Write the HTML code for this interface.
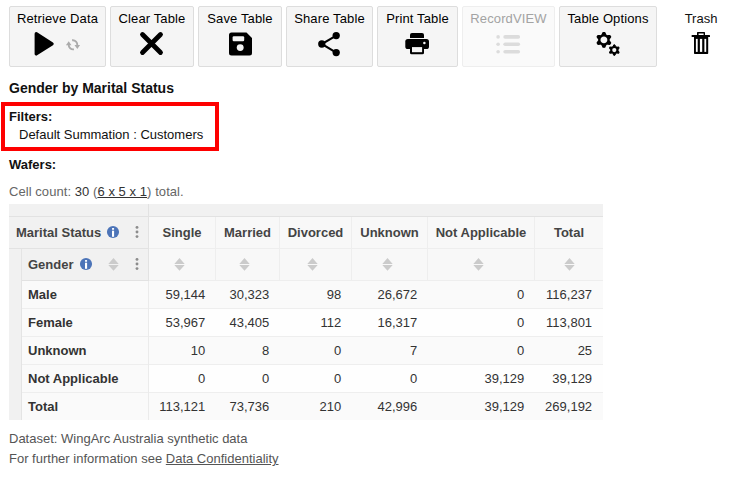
<!DOCTYPE html>
<html>
<head>
<meta charset="utf-8">
<title>Gender by Marital Status</title>
<style>
html,body{margin:0;padding:0;background:#fff;}
body{width:741px;height:478px;position:relative;overflow:hidden;font-family:"Liberation Sans",sans-serif;font-size:13px;color:#111;}
.abs{position:absolute;white-space:nowrap;}
.btn{position:absolute;top:6px;height:61px;box-sizing:border-box;border:1px solid #dddddd;border-radius:2px;background:#f5f5f5;text-align:center;}
.btn.dis{background:#fafafa;border-color:#eeeeee;color:#a3a3a3;}
.btn .lbl{position:absolute;left:0;right:0;top:4px;line-height:15px;font-size:13px;letter-spacing:0.13px;color:#000;}
.btn.dis .lbl{color:#a3a3a3;}
.btn svg{position:absolute;}
.t{position:absolute;line-height:15px;white-space:nowrap;}
.b{font-weight:bold;}
/* table */
.cell{position:absolute;box-sizing:border-box;}
.hd{color:#444;font-weight:bold;}
.num{position:absolute;text-align:right;line-height:15px;color:#333;}
</style>
</head>
<body>

<!-- toolbar -->
<div class="btn" style="left:9px;width:97px;"><span class="lbl">Retrieve Data</span>
<svg style="left:20px;top:22px" width="30" height="30" viewBox="30 29 30 30"><path d="M36.2 33.7 L52.1 43.85 L36.2 54 Z" fill="#000" stroke="#000" stroke-width="3.2" stroke-linejoin="round"/></svg>
<svg style="left:50px;top:30px" width="24" height="18" viewBox="60 37 24 18"><g fill="none" stroke="#ababab" stroke-width="1.9"><path d="M73.9 49.3 A4.5 4.5 0 0 1 68.7 44.6"/><path d="M72.1 40.3 A4.6 4.6 0 0 1 77.3 45.6"/></g><path d="M68.7 41.3 L65.9 45.3 L71.5 45.3 Z" fill="#ababab"/><path d="M77.3 48.9 L74.5 45 L80.1 45 Z" fill="#ababab"/></svg>
</div>

<div class="btn" style="left:110px;width:84px;"><span class="lbl">Clear Table</span>
<svg style="left:27.95px;top:24px" width="25" height="25" viewBox="0 0 25 25"><path d="M3.5 3.5 L21.5 21.5 M21.5 3.5 L3.5 21.5" stroke="#000" stroke-width="4.8" stroke-linecap="round" fill="none"/></svg>
</div>

<div class="btn" style="left:198px;width:84px;"><span class="lbl">Save Table</span>
<svg style="left:28.7px;top:25px" width="25" height="25" viewBox="0 0 25 25"><path d="M3.5 0.5 H18.5 L24 6 V21 a2.5 2.5 0 0 1 -2.5 2.5 H3.5 a2.5 2.5 0 0 1 -2.5 -2.5 V3 a2.5 2.5 0 0 1 2.5 -2.5 Z" fill="#000"/><rect x="4.6" y="4.3" width="11.6" height="4.9" rx="1.2" fill="#f5f5f5"/><circle cx="12.2" cy="15.6" r="3.45" fill="#f5f5f5"/></svg>
</div>

<div class="btn" style="left:286px;width:87px;"><span class="lbl">Share Table</span>
<svg style="left:29.2px;top:23.2px" width="26" height="27" viewBox="0 0 26 27"><path d="M20.2 5.6 L5.8 14 L20.2 22.6" stroke="#000" stroke-width="2.05" fill="none"/><circle cx="20.2" cy="5.6" r="3.65" fill="#000"/><circle cx="5.8" cy="14" r="3.65" fill="#000"/><circle cx="20.2" cy="22.6" r="3.65" fill="#000"/></svg>
</div>

<div class="btn" style="left:377px;width:81px;"><span class="lbl">Print Table</span>
<svg style="left:22px;top:23px" width="36" height="30" viewBox="400 30 36 30"><path d="M410 38 V35 a2 2 0 0 1 2 -2 H422 a2 2 0 0 1 2 2 V38 Z" fill="#000"/><rect x="405.3" y="39" width="23.7" height="10" rx="2.6" fill="#000"/><rect x="410" y="45" width="14" height="9.3" rx="1.6" fill="#000"/><rect x="412" y="47.1" width="10.1" height="5.1" fill="#f5f5f5"/><circle cx="424.4" cy="42.9" r="1.25" fill="#f5f5f5"/></svg>
</div>

<div class="btn dis" style="left:462px;width:93px;"><span class="lbl">RecordVIEW</span>
<svg style="left:32px;top:26px" width="28" height="22" viewBox="0 0 28 22"><g fill="#dcdcdc"><circle cx="3.1" cy="3.9" r="1.8"/><circle cx="3.1" cy="11.2" r="1.8"/><circle cx="3.1" cy="18.7" r="1.8"/><rect x="8.3" y="2.1" width="16.8" height="3.6" rx="1.8"/><rect x="8.3" y="9.4" width="16.8" height="3.6" rx="1.8"/><rect x="8.3" y="16.9" width="16.8" height="3.6" rx="1.8"/></g></svg>
</div>

<div class="btn" style="left:559px;width:98px;"><span class="lbl">Table Options</span>
<svg style="left:30px;top:21px" width="36" height="32" viewBox="590 28 36 32"><g transform="translate(603.9,39.9)"><circle r="4.65" fill="none" stroke="#000" stroke-width="2.4"/><g fill="#000" stroke="#000" stroke-width="1.3" stroke-linejoin="round"><path d="M-1.7 -5.4 L-0.8 -7.3 L0.8 -7.3 L1.7 -5.4 Z" transform="rotate(0)"/><path d="M-1.7 -5.4 L-0.8 -7.3 L0.8 -7.3 L1.7 -5.4 Z" transform="rotate(60)"/><path d="M-1.7 -5.4 L-0.8 -7.3 L0.8 -7.3 L1.7 -5.4 Z" transform="rotate(120)"/><path d="M-1.7 -5.4 L-0.8 -7.3 L0.8 -7.3 L1.7 -5.4 Z" transform="rotate(180)"/><path d="M-1.7 -5.4 L-0.8 -7.3 L0.8 -7.3 L1.7 -5.4 Z" transform="rotate(240)"/><path d="M-1.7 -5.4 L-0.8 -7.3 L0.8 -7.3 L1.7 -5.4 Z" transform="rotate(300)"/></g></g><g transform="translate(614.3,50.1)"><circle r="3.1" fill="none" stroke="#000" stroke-width="2.0"/><g fill="#000" stroke="#000" stroke-width="1.0" stroke-linejoin="round"><path d="M-1.2 -3.8 L-0.5 -5.25 L0.5 -5.25 L1.2 -3.8 Z" transform="rotate(0)"/><path d="M-1.2 -3.8 L-0.5 -5.25 L0.5 -5.25 L1.2 -3.8 Z" transform="rotate(60)"/><path d="M-1.2 -3.8 L-0.5 -5.25 L0.5 -5.25 L1.2 -3.8 Z" transform="rotate(120)"/><path d="M-1.2 -3.8 L-0.5 -5.25 L0.5 -5.25 L1.2 -3.8 Z" transform="rotate(180)"/><path d="M-1.2 -3.8 L-0.5 -5.25 L0.5 -5.25 L1.2 -3.8 Z" transform="rotate(240)"/><path d="M-1.2 -3.8 L-0.5 -5.25 L0.5 -5.25 L1.2 -3.8 Z" transform="rotate(300)"/></g></g></svg>
</div>

<div class="abs" style="left:661px;top:6px;width:80px;height:60px;text-align:center;"><span class="lbl" style="position:absolute;left:0;right:0;top:5px;line-height:15px;">Trash</span>
<svg style="position:absolute;left:23px;top:22px" width="36" height="30" viewBox="684 28 36 30"><rect x="697" y="31.9" width="8" height="4" rx="0.6" fill="#000"/><rect x="698.6" y="33.5" width="5" height="2" fill="#fff"/><rect x="691.6" y="34.9" width="18.4" height="2" rx="0.5" fill="#000"/><path d="M694 36.5 H708.2 V53.2 a0.7 0.7 0 0 1 -0.7 0.7 H694.7 a0.7 0.7 0 0 1 -0.7 -0.7 Z" fill="#000"/><rect x="695.9" y="38.9" width="1.8" height="13" fill="#fff"/><rect x="699.9" y="38.9" width="2.3" height="13" fill="#fff"/><rect x="704.4" y="38.9" width="1.8" height="13" fill="#fff"/></svg>
</div>

<!-- headings -->
<div class="t b" style="left:9px;top:80px;font-size:14px;line-height:16px;">Gender by Marital Status</div>
<div class="abs" style="left:1px;top:102px;width:218px;height:49px;box-sizing:border-box;border:4px solid #fe0000;"></div>
<div class="t b" style="left:9px;top:109px;">Filters:</div>
<div class="t" style="left:19px;top:127px;">Default Summation : Customers</div>
<div class="t b" style="left:9px;top:157px;">Wafers:</div>
<div class="t" style="left:9px;top:184px;color:#666;letter-spacing:0.06px;">Cell count: <span style="color:#333">30</span> (<span style="color:#333;text-decoration:underline">6 x 5 x 1</span>) total.</div>

<!-- table -->
<div id="tbl" class="abs" style="left:9px;top:204px;width:594px;height:216px;background:#eeeeee;"></div>
<!-- darker header borders -->
<div class="cell" style="left:9px;top:216px;width:594px;height:1px;background:#e2e2e2;"></div>
<div class="cell" style="left:148px;top:204px;width:1px;height:77px;background:#e2e2e2;"></div>
<div class="cell" style="left:9px;top:248px;width:140px;height:1px;background:#e2e2e2;"></div>
<div class="cell" style="left:21px;top:280px;width:128px;height:1px;background:#e2e2e2;"></div>
<div class="cell" style="left:21px;top:249px;width:1px;height:171px;background:#e4e4e4;"></div>
<div class="cell" style="left:148px;top:281px;width:1px;height:139px;background:#ebebeb;"></div>
<!-- top strip -->
<div class="cell" style="left:9px;top:204px;width:139px;height:12px;background:#f1f1f1;"></div>
<div class="cell" style="left:149px;top:204px;width:454px;height:12px;background:#f1f1f1;"></div>
<!-- marital status header -->
<div class="cell" style="left:9px;top:217px;width:139px;height:31px;background:#f1f1f1;"></div>
<!-- left strip -->
<div class="cell" style="left:9px;top:249px;width:12px;height:171px;background:#f1f1f1;"></div>
<!-- gender header -->
<div class="cell" style="left:22px;top:249px;width:126px;height:31px;background:#f1f1f1;"></div>

<div class="t hd" style="left:16px;top:225px;">Marital Status</div>
<div class="t hd" style="left:28px;top:257px;">Gender</div>

<!-- icons -->
<svg class="abs" style="left:106.05px;top:224.95px" width="14" height="14" viewBox="0 0 14 14"><circle cx="7" cy="7" r="6.05" fill="#4c74b8"/><rect x="6" y="2.9" width="2.1" height="1.9" rx="0.5" fill="#fff"/><rect x="6" y="5.7" width="2.1" height="6.1" fill="#fff"/></svg>
<svg class="abs" style="left:79.00px;top:257.00px" width="14" height="14" viewBox="0 0 14 14"><circle cx="7" cy="7" r="6.05" fill="#4c74b8"/><rect x="6" y="2.9" width="2.1" height="1.9" rx="0.5" fill="#fff"/><rect x="6" y="5.7" width="2.1" height="6.1" fill="#fff"/></svg>
<svg class="abs" style="left:133.90px;top:225.00px" width="6" height="14" viewBox="0 0 6 14"><g fill="#8c8c8c"><circle cx="3" cy="2.4" r="1.45"/><circle cx="3" cy="7" r="1.45"/><circle cx="3" cy="11.6" r="1.45"/></g></svg>
<svg class="abs" style="left:133.90px;top:256.85px" width="6" height="14" viewBox="0 0 6 14"><g fill="#8c8c8c"><circle cx="3" cy="2.4" r="1.45"/><circle cx="3" cy="7" r="1.45"/><circle cx="3" cy="11.6" r="1.45"/></g></svg>
<div id="gen">
<div class="cell" style="left:149px;top:217px;width:66px;height:31px;background:#f8f8f8;"></div>
<div class="cell" style="left:149px;top:249px;width:66px;height:31px;background:#f8f8f8;"></div>
<div class="t hd" style="left:149px;width:66px;top:225px;text-align:center;">Single</div>
<svg class="abs" style="left:173.6px;top:257.5px" width="11" height="13" viewBox="0 0 11 13"><path d="M0.3 6 L5.5 0 L10.7 6 Z M0.3 7.1 L5.5 12.7 L10.7 7.1 Z" fill="#cbcbcb"/></svg>
<div class="cell" style="left:216px;top:217px;width:63px;height:31px;background:#f8f8f8;"></div>
<div class="cell" style="left:216px;top:249px;width:63px;height:31px;background:#f8f8f8;"></div>
<div class="t hd" style="left:216px;width:63px;top:225px;text-align:center;">Married</div>
<svg class="abs" style="left:238.8px;top:257.5px" width="11" height="13" viewBox="0 0 11 13"><path d="M0.3 6 L5.5 0 L10.7 6 Z M0.3 7.1 L5.5 12.7 L10.7 7.1 Z" fill="#cbcbcb"/></svg>
<div class="cell" style="left:280px;top:217px;width:71px;height:31px;background:#f8f8f8;"></div>
<div class="cell" style="left:280px;top:249px;width:71px;height:31px;background:#f8f8f8;"></div>
<div class="t hd" style="left:280px;width:71px;top:225px;text-align:center;">Divorced</div>
<svg class="abs" style="left:306.6px;top:257.5px" width="11" height="13" viewBox="0 0 11 13"><path d="M0.3 6 L5.5 0 L10.7 6 Z M0.3 7.1 L5.5 12.7 L10.7 7.1 Z" fill="#cbcbcb"/></svg>
<div class="cell" style="left:352px;top:217px;width:75px;height:31px;background:#f8f8f8;"></div>
<div class="cell" style="left:352px;top:249px;width:75px;height:31px;background:#f8f8f8;"></div>
<div class="t hd" style="left:352px;width:75px;top:225px;text-align:center;">Unknown</div>
<svg class="abs" style="left:381.5px;top:257.5px" width="11" height="13" viewBox="0 0 11 13"><path d="M0.3 6 L5.5 0 L10.7 6 Z M0.3 7.1 L5.5 12.7 L10.7 7.1 Z" fill="#cbcbcb"/></svg>
<div class="cell" style="left:428px;top:217px;width:106px;height:31px;background:#f8f8f8;"></div>
<div class="cell" style="left:428px;top:249px;width:106px;height:31px;background:#f8f8f8;"></div>
<div class="t hd" style="left:428px;width:106px;top:225px;text-align:center;">Not Applicable</div>
<svg class="abs" style="left:472.5px;top:257.5px" width="11" height="13" viewBox="0 0 11 13"><path d="M0.3 6 L5.5 0 L10.7 6 Z M0.3 7.1 L5.5 12.7 L10.7 7.1 Z" fill="#cbcbcb"/></svg>
<div class="cell" style="left:535px;top:217px;width:68px;height:31px;background:#f8f8f8;"></div>
<div class="cell" style="left:535px;top:249px;width:68px;height:31px;background:#f8f8f8;"></div>
<div class="t hd" style="left:535px;width:68px;top:225px;text-align:center;">Total</div>
<svg class="abs" style="left:563.7px;top:257.5px" width="11" height="13" viewBox="0 0 11 13"><path d="M0.3 6 L5.5 0 L10.7 6 Z M0.3 7.1 L5.5 12.7 L10.7 7.1 Z" fill="#cbcbcb"/></svg>
<svg class="abs" style="left:107.5px;top:257.5px" width="11" height="13" viewBox="0 0 11 13"><path d="M0.3 6 L5.5 0 L10.7 6 Z M0.3 7.1 L5.5 12.7 L10.7 7.1 Z" fill="#cbcbcb"/></svg>
<div class="cell" style="left:22px;top:281px;width:126px;height:27px;background:#fafafa;"></div>
<div class="t hd" style="left:28px;top:287px;color:#333;">Male</div>
<div class="cell" style="left:149px;top:281px;width:67px;height:27px;background:#fafafa;"></div>
<div class="num" style="left:149px;width:56.3px;top:287px;">59,144</div>
<div class="cell" style="left:216px;top:281px;width:64px;height:27px;background:#fafafa;"></div>
<div class="num" style="left:216px;width:53.3px;top:287px;">30,323</div>
<div class="cell" style="left:280px;top:281px;width:72px;height:27px;background:#fafafa;"></div>
<div class="num" style="left:280px;width:61.3px;top:287px;">98</div>
<div class="cell" style="left:352px;top:281px;width:76px;height:27px;background:#fafafa;"></div>
<div class="num" style="left:352px;width:65.3px;top:287px;">26,672</div>
<div class="cell" style="left:428px;top:281px;width:107px;height:27px;background:#fafafa;"></div>
<div class="num" style="left:428px;width:96.3px;top:287px;">0</div>
<div class="cell" style="left:535px;top:281px;width:68px;height:27px;background:#fafafa;"></div>
<div class="num" style="left:535px;width:57.1px;top:287px;">116,237</div>
<div class="cell" style="left:22px;top:309px;width:126px;height:27px;background:#fafafa;"></div>
<div class="t hd" style="left:28px;top:315px;color:#333;">Female</div>
<div class="cell" style="left:149px;top:309px;width:67px;height:27px;background:#fefefe;"></div>
<div class="num" style="left:149px;width:56.3px;top:315px;">53,967</div>
<div class="cell" style="left:216px;top:309px;width:64px;height:27px;background:#fefefe;"></div>
<div class="num" style="left:216px;width:53.3px;top:315px;">43,405</div>
<div class="cell" style="left:280px;top:309px;width:72px;height:27px;background:#fefefe;"></div>
<div class="num" style="left:280px;width:61.3px;top:315px;">112</div>
<div class="cell" style="left:352px;top:309px;width:76px;height:27px;background:#fefefe;"></div>
<div class="num" style="left:352px;width:65.3px;top:315px;">16,317</div>
<div class="cell" style="left:428px;top:309px;width:107px;height:27px;background:#fefefe;"></div>
<div class="num" style="left:428px;width:96.3px;top:315px;">0</div>
<div class="cell" style="left:535px;top:309px;width:68px;height:27px;background:#fefefe;"></div>
<div class="num" style="left:535px;width:57.1px;top:315px;">113,801</div>
<div class="cell" style="left:22px;top:337px;width:126px;height:27px;background:#fafafa;"></div>
<div class="t hd" style="left:28px;top:343px;color:#333;">Unknown</div>
<div class="cell" style="left:149px;top:337px;width:67px;height:27px;background:#fafafa;"></div>
<div class="num" style="left:149px;width:56.3px;top:343px;">10</div>
<div class="cell" style="left:216px;top:337px;width:64px;height:27px;background:#fafafa;"></div>
<div class="num" style="left:216px;width:53.3px;top:343px;">8</div>
<div class="cell" style="left:280px;top:337px;width:72px;height:27px;background:#fafafa;"></div>
<div class="num" style="left:280px;width:61.3px;top:343px;">0</div>
<div class="cell" style="left:352px;top:337px;width:76px;height:27px;background:#fafafa;"></div>
<div class="num" style="left:352px;width:65.3px;top:343px;">7</div>
<div class="cell" style="left:428px;top:337px;width:107px;height:27px;background:#fafafa;"></div>
<div class="num" style="left:428px;width:96.3px;top:343px;">0</div>
<div class="cell" style="left:535px;top:337px;width:68px;height:27px;background:#fafafa;"></div>
<div class="num" style="left:535px;width:57.1px;top:343px;">25</div>
<div class="cell" style="left:22px;top:365px;width:126px;height:27px;background:#fafafa;"></div>
<div class="t hd" style="left:28px;top:371px;color:#333;">Not Applicable</div>
<div class="cell" style="left:149px;top:365px;width:67px;height:27px;background:#fefefe;"></div>
<div class="num" style="left:149px;width:56.3px;top:371px;">0</div>
<div class="cell" style="left:216px;top:365px;width:64px;height:27px;background:#fefefe;"></div>
<div class="num" style="left:216px;width:53.3px;top:371px;">0</div>
<div class="cell" style="left:280px;top:365px;width:72px;height:27px;background:#fefefe;"></div>
<div class="num" style="left:280px;width:61.3px;top:371px;">0</div>
<div class="cell" style="left:352px;top:365px;width:76px;height:27px;background:#fefefe;"></div>
<div class="num" style="left:352px;width:65.3px;top:371px;">0</div>
<div class="cell" style="left:428px;top:365px;width:107px;height:27px;background:#fefefe;"></div>
<div class="num" style="left:428px;width:96.3px;top:371px;">39,129</div>
<div class="cell" style="left:535px;top:365px;width:68px;height:27px;background:#fefefe;"></div>
<div class="num" style="left:535px;width:57.1px;top:371px;">39,129</div>
<div class="cell" style="left:22px;top:393px;width:126px;height:27px;background:#fafafa;"></div>
<div class="t hd" style="left:28px;top:399px;color:#333;">Total</div>
<div class="cell" style="left:149px;top:393px;width:67px;height:27px;background:#fafafa;"></div>
<div class="num" style="left:149px;width:56.3px;top:399px;">113,121</div>
<div class="cell" style="left:216px;top:393px;width:64px;height:27px;background:#fafafa;"></div>
<div class="num" style="left:216px;width:53.3px;top:399px;">73,736</div>
<div class="cell" style="left:280px;top:393px;width:72px;height:27px;background:#fafafa;"></div>
<div class="num" style="left:280px;width:61.3px;top:399px;">210</div>
<div class="cell" style="left:352px;top:393px;width:76px;height:27px;background:#fafafa;"></div>
<div class="num" style="left:352px;width:65.3px;top:399px;">42,996</div>
<div class="cell" style="left:428px;top:393px;width:107px;height:27px;background:#fafafa;"></div>
<div class="num" style="left:428px;width:96.3px;top:399px;">39,129</div>
<div class="cell" style="left:535px;top:393px;width:68px;height:27px;background:#fafafa;"></div>
<div class="num" style="left:535px;width:57.1px;top:399px;">269,192</div>
</div>

<!-- footer -->
<div class="t" style="left:9px;top:431px;color:#555;">Dataset: WingArc Australia synthetic data</div>
<div class="t" style="left:9px;top:451px;color:#555;">For further information see <span style="text-decoration:underline">Data Confidentiality</span></div>

</body>
</html>
